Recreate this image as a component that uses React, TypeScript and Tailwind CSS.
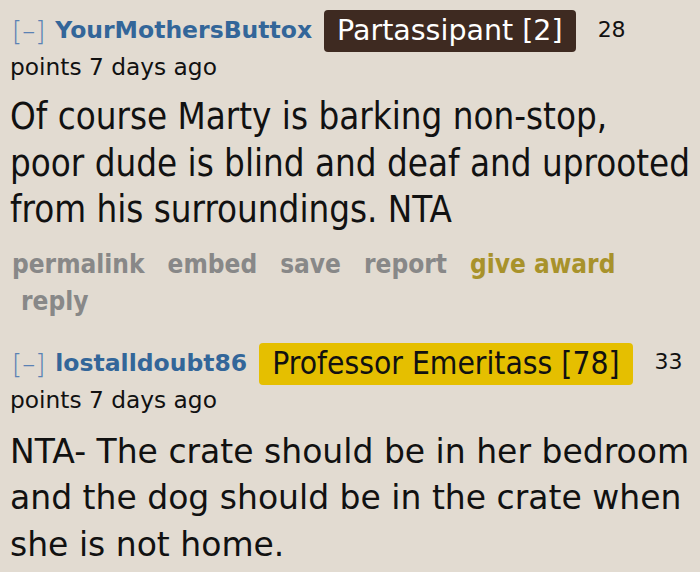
const cond = "font-['DejaVu_Sans_Condensed','DejaVu_Sans',sans-serif]";
const sans = "font-['DejaVu_Sans',sans-serif]";

function Header({
  name,
  flair,
  flairClass,
  score,
}: {
  name: string;
  flair: string;
  flairClass: string;
  score: string;
}) {
  return (
    <>
      <div className="flex h-[42px] items-center pl-[2px]">
        <span className={`${sans} text-[26px] font-light leading-none text-[#5a82b4]`}>[–]</span>
        <span className={`ml-[10px] ${sans} text-[23.5px] font-bold text-[#336699]`}>{name}</span>
        <span
          className={`ml-[12px] flex h-[42px] items-center rounded-[4px] px-[13px] ${flairClass}`}
        >
          {flair}
        </span>
        <span className={`ml-[22px] -mt-[4px] ${sans} text-[22px] text-[#111]`}>{score}</span>
      </div>
      <div className={`${sans} text-[23.3px] leading-[30px] text-[#111]`}>points 7 days ago</div>
    </>
  );
}

export default function App() {
  return (
    <div className="h-[572px] w-[700px] overflow-hidden bg-[#e2dbd1] px-[10px] pt-[10px]">
      <Header
        name="YourMothersButtox"
        flair="Partassipant [2]"
        flairClass={`bg-[#3e2a21] text-white text-[28.5px] ${sans}`}
        score="28"
      />
      <div className={`mt-[12px] whitespace-nowrap text-[36.4px] leading-[46.5px] text-[#111] ${cond}`}>
        <p>Of course Marty is barking non-stop,</p>
        <p>poor dude is blind and deaf and uprooted</p>
        <p>from his surroundings. NTA</p>
      </div>
      <div
        className={`mt-[12px] pl-[2px] text-[26px] font-bold leading-[37px] text-[#888] ${cond}`}
      >
        <div className="flex gap-x-[23px]">
          <span>permalink</span>
          <span>embed</span>
          <span>save</span>
          <span>report</span>
          <span className="text-[#a8922b]">give award</span>
        </div>
        <div className="pl-[9px]">reply</div>
      </div>

      <div className="mt-[23px]">
        <Header
          name="lostalldoubt86"
          flair="Professor Emeritass [78]"
          flairClass={`bg-[#e5bf00] text-[#111] text-[31.5px] ${cond}`}
          score="33"
        />
        <div className={`mt-[14px] whitespace-nowrap ${sans} text-[33px] leading-[46.5px] text-[#111]`}>
          <p>NTA- The crate should be in her bedroom</p>
          <p>and the dog should be in the crate when</p>
          <p>she is not home.</p>
        </div>
      </div>
    </div>
  );
}
